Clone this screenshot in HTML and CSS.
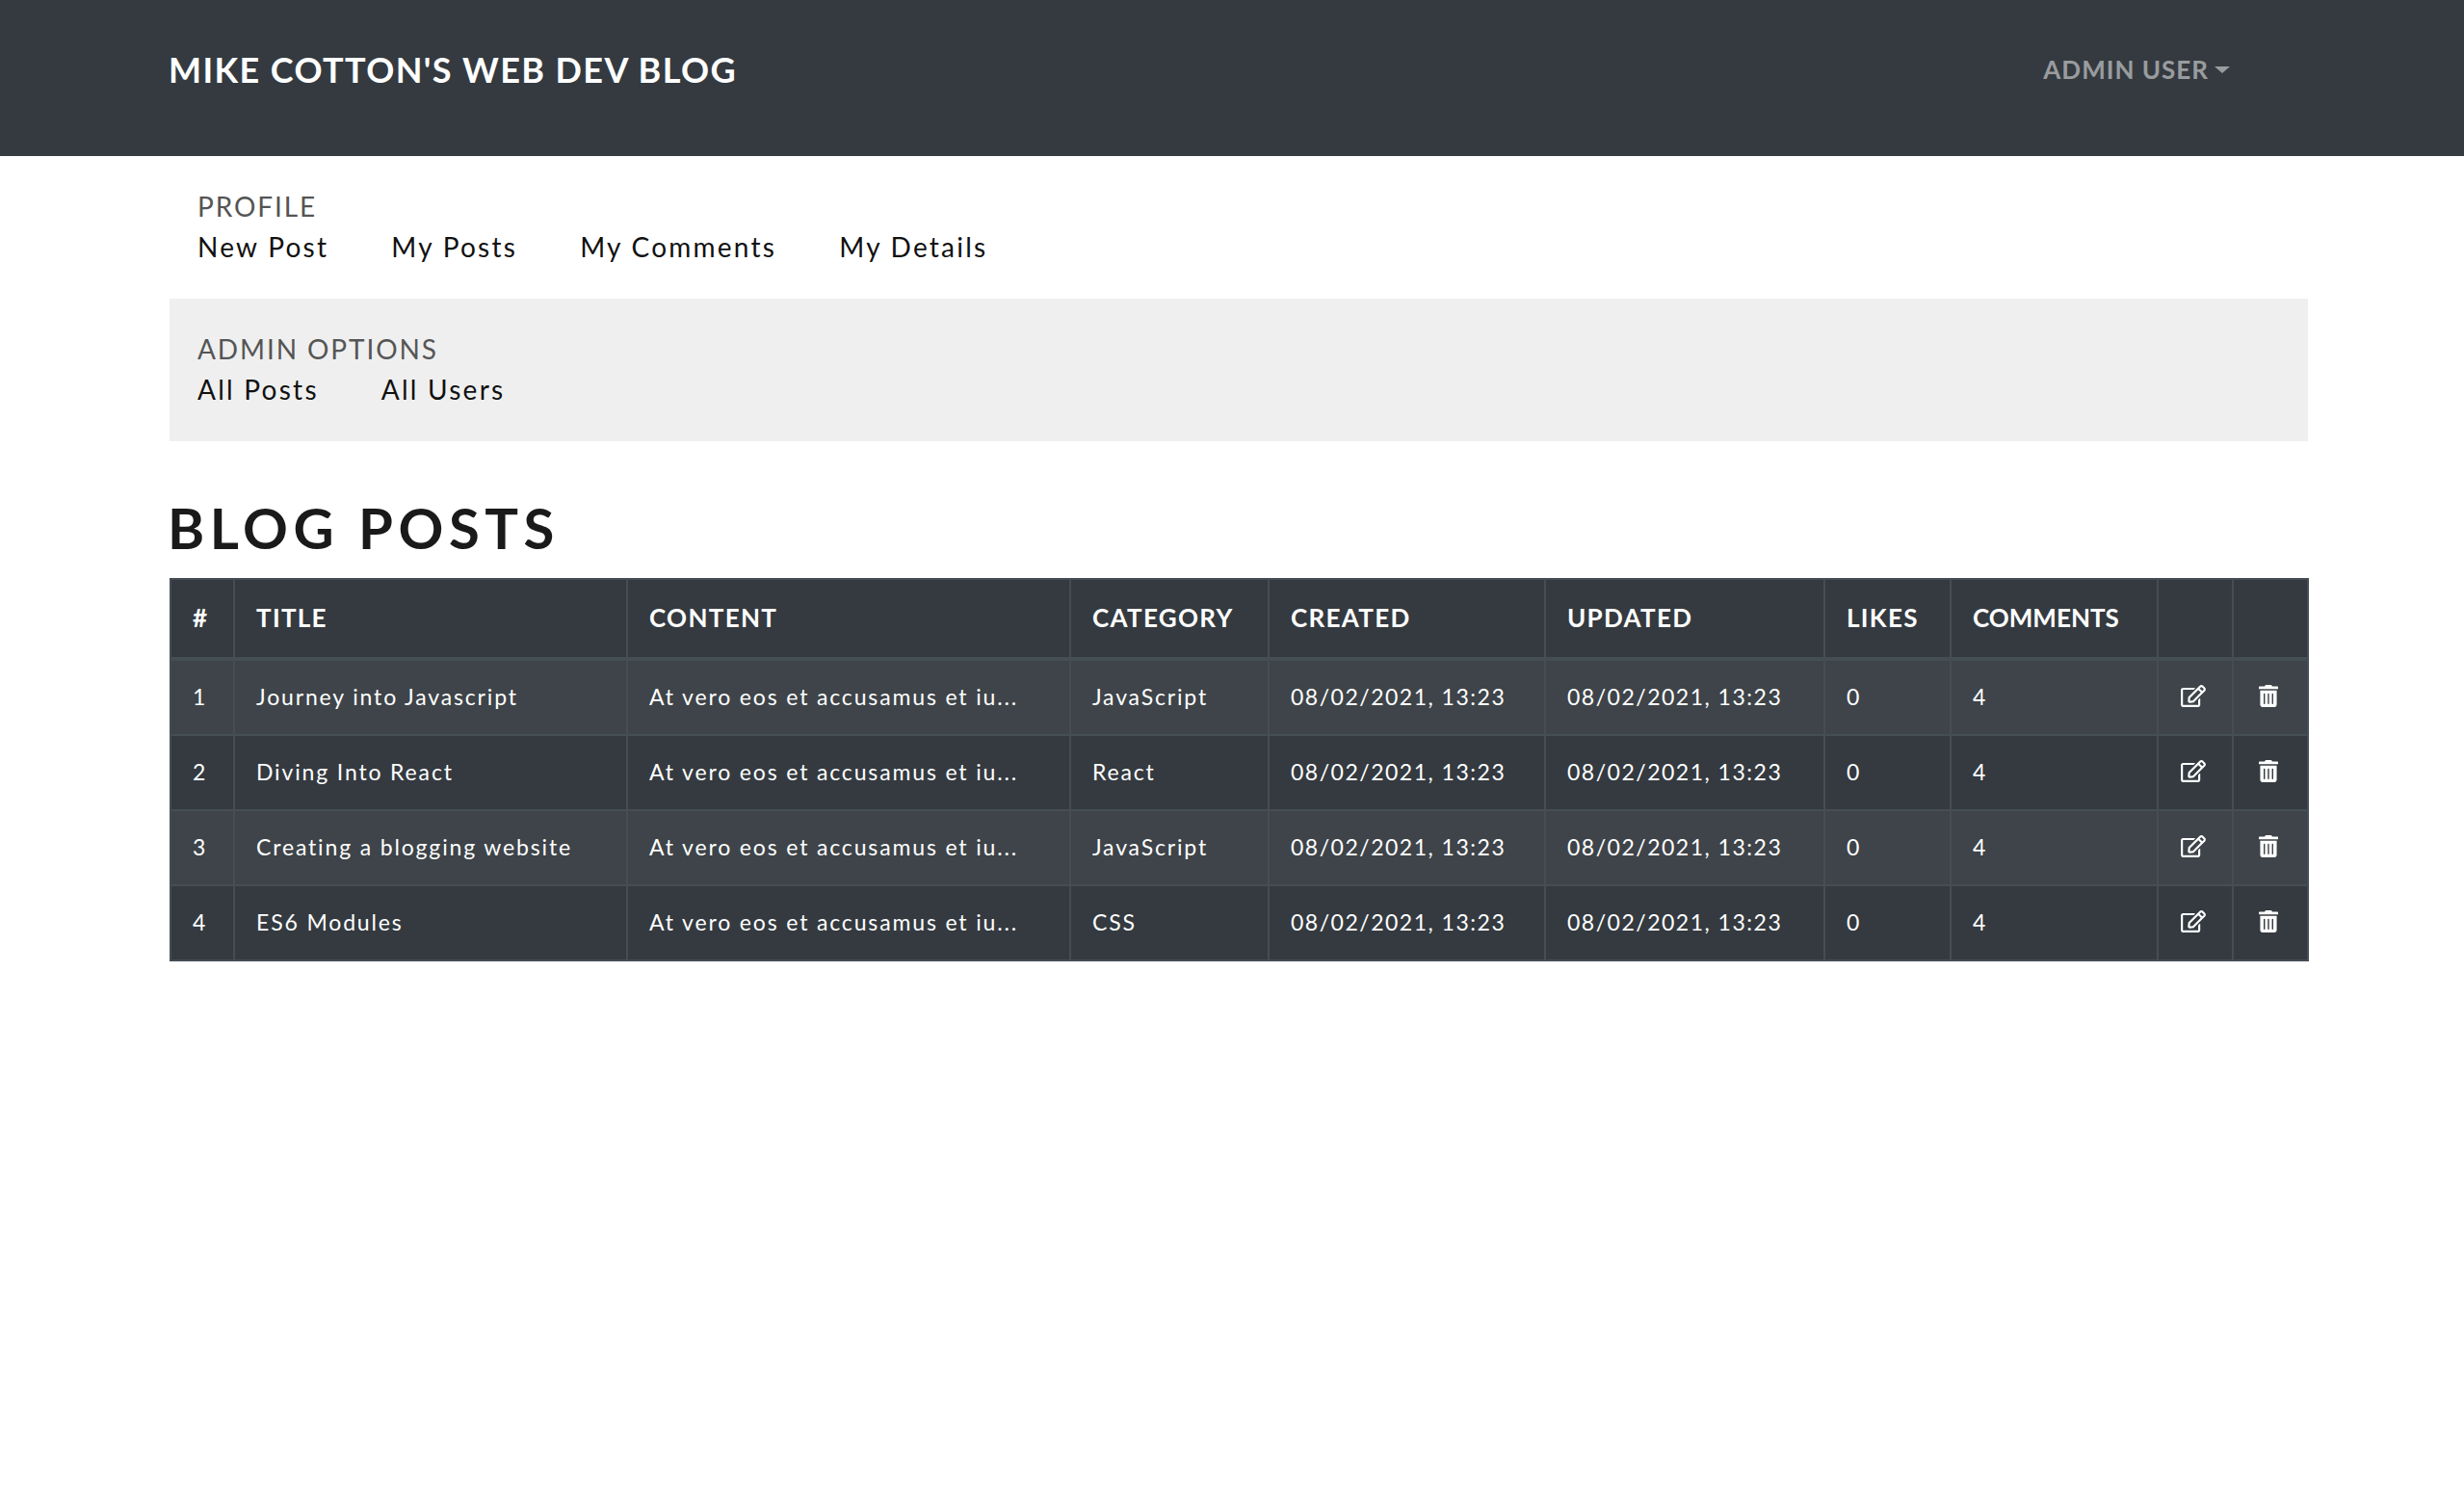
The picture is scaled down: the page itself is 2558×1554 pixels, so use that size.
FILE: index.html
```html
<!DOCTYPE html>
<html>
<head>
  <title>Mike Cotton's Web Dev Blog</title>
  <link rel="stylesheet" href="styles.css">
</head>
<body>
  <svg class="icon-defs" width="0" height="0">
    <symbol id="icon-edit" viewBox="0 0 576 512">
      <path d="M402.3 344.9l32-32c5-5 13.7-1.5 13.7 5.7V464c0 26.5-21.5 48-48 48H48c-26.5 0-48-21.5-48-48V112c0-26.5 21.5-48 48-48h273.5c7.1 0 10.7 8.6 5.7 13.7l-32 32c-1.5 1.5-3.5 2.3-5.7 2.3H48v352h352V350.5c0-2.1.8-4.1 2.3-5.6zm156.6-201.8L296.3 405.7l-90.4 10c-26.2 2.9-48.5-19.2-45.6-45.6l10-90.4L432.9 17.1c22.9-22.9 59.9-22.9 82.7 0l43.2 43.2c22.9 22.9 22.9 60 .1 82.8zM460.1 174L402 115.9 216.2 301.8l-7.3 65.3 65.3-7.3L460.1 174zm64.8-79.7l-43.2-43.2c-4.1-4.1-10.8-4.1-14.8 0L436 82l58.1 58.1 30.9-30.9c4-4.2 4-10.8-.1-14.9z"/>
    </symbol>
    <symbol id="icon-trash" viewBox="0 0 448 512">
      <path d="M32 464a48 48 0 0 0 48 48h288a48 48 0 0 0 48-48V128H32zm272-256a16 16 0 0 1 32 0v224a16 16 0 0 1-32 0zm-96 0a16 16 0 0 1 32 0v224a16 16 0 0 1-32 0zm-96 0a16 16 0 0 1 32 0v224a16 16 0 0 1-32 0zM432 32H312l-9.4-18.7A24 24 0 0 0 281.1 0H166.8a23.72 23.72 0 0 0-21.4 13.3L136 32H16A16 16 0 0 0 0 48v32a16 16 0 0 0 16 16h416a16 16 0 0 0 16-16V48a16 16 0 0 0-16-16z"/>
    </symbol>
  </svg>

  <nav class="navbar">
    <a class="brand" href="#">Mike Cotton's Web Dev Blog</a>
    <a class="user-menu" href="#">Admin User<span class="caret"></span></a>
  </nav>

  <div class="container">
    <div class="panel">
      <div class="panel-title">Profile</div>
      <div class="panel-links">
        <a href="#">New Post</a>
        <a href="#">My Posts</a>
        <a href="#">My Comments</a>
        <a href="#">My Details</a>
      </div>
    </div>
    <div class="panel panel-grey">
      <div class="panel-title">Admin Options</div>
      <div class="panel-links">
        <a href="#">All Posts</a>
        <a href="#">All Users</a>
      </div>
    </div>

    <h1>Blog Posts</h1>

    <table>
      <colgroup>
        <col class="col-id">
        <col class="col-title">
        <col class="col-content">
        <col class="col-category">
        <col class="col-date">
        <col class="col-updated">
        <col class="col-likes">
        <col class="col-comments">
        <col class="col-action">
        <col class="col-action">
      </colgroup>
      <thead>
        <tr>
          <th>#</th>
          <th>Title</th>
          <th>Content</th>
          <th>Category</th>
          <th>Created</th>
          <th>Updated</th>
          <th>Likes</th>
          <th class="th-tight">Comments</th>
          <th></th>
          <th></th>
        </tr>
      </thead>
      <tbody>
        <tr>
          <td>1</td>
          <td>Journey into Javascript</td>
          <td>At vero eos et accusamus et iu...</td>
          <td>JavaScript</td>
          <td class="date">08/02/2021, 13:23</td>
          <td class="date">08/02/2021, 13:23</td>
          <td>0</td>
          <td>4</td>
          <td class="action"><svg class="icon-edit"><use href="#icon-edit"/></svg></td>
          <td class="action"><svg class="icon-trash"><use href="#icon-trash"/></svg></td>
        </tr>
        <tr>
          <td>2</td>
          <td>Diving Into React</td>
          <td>At vero eos et accusamus et iu...</td>
          <td>React</td>
          <td class="date">08/02/2021, 13:23</td>
          <td class="date">08/02/2021, 13:23</td>
          <td>0</td>
          <td>4</td>
          <td class="action"><svg class="icon-edit"><use href="#icon-edit"/></svg></td>
          <td class="action"><svg class="icon-trash"><use href="#icon-trash"/></svg></td>
        </tr>
        <tr>
          <td>3</td>
          <td>Creating a blogging website</td>
          <td>At vero eos et accusamus et iu...</td>
          <td>JavaScript</td>
          <td class="date">08/02/2021, 13:23</td>
          <td class="date">08/02/2021, 13:23</td>
          <td>0</td>
          <td>4</td>
          <td class="action"><svg class="icon-edit"><use href="#icon-edit"/></svg></td>
          <td class="action"><svg class="icon-trash"><use href="#icon-trash"/></svg></td>
        </tr>
        <tr>
          <td>4</td>
          <td>ES6 Modules</td>
          <td>At vero eos et accusamus et iu...</td>
          <td>CSS</td>
          <td class="date">08/02/2021, 13:23</td>
          <td class="date">08/02/2021, 13:23</td>
          <td>0</td>
          <td>4</td>
          <td class="action"><svg class="icon-edit"><use href="#icon-edit"/></svg></td>
          <td class="action"><svg class="icon-trash"><use href="#icon-trash"/></svg></td>
        </tr>
      </tbody>
    </table>
  </div>
</body>
</html>
```

FILE: styles.css
```css
body {
  font-family: "Lato", "Open Sans", sans-serif;
  margin: 0;
  background-color: #fff;
  color: #111;
}
a {
  text-decoration: none;
  color: inherit;
}
.icon-defs {
  display: block;
  height: 0;
}
.navbar {
  height: 162px;
  box-sizing: border-box;
  padding: 50px 243px 0 175px;
  background-color: #343a40;
  display: flex;
  justify-content: space-between;
  align-items: flex-start;
  text-transform: uppercase;
}
.brand {
  font-size: 36px;
  line-height: 44px;
  font-weight: 700;
  letter-spacing: 1.4px;
  color: #fff;
}
.user-menu {
  font-size: 26px;
  line-height: 44px;
  font-weight: 700;
  letter-spacing: 1px;
  color: rgba(255, 255, 255, .5);
  display: flex;
  align-items: center;
}
.caret {
  width: 0;
  height: 0;
  margin-left: 6px;
  border-top: 7px solid rgba(255, 255, 255, .5);
  border-left: 8px solid transparent;
  border-right: 8px solid transparent;
}
.container {
  width: 2220px;
  margin-left: 176px;
}
.panel {
  height: 148px;
  box-sizing: border-box;
  padding: 34px 29px 0;
}
.panel-grey {
  padding-top: 34px;
  background-color: #efefef;
}
.panel-title {
  font-size: 28px;
  line-height: 36px;
  letter-spacing: 1.9px;
  text-transform: uppercase;
  color: #555;
}
.panel-links {
  display: flex;
  gap: 65px;
  margin-top: 6px;
  font-size: 28px;
  line-height: 36px;
  letter-spacing: 2.25px;
  color: #111;
}
h1 {
  margin: 57px 0 0 -2px;
  font-size: 58px;
  line-height: 66px;
  font-weight: 700;
  letter-spacing: 5.6px;
  text-transform: uppercase;
  color: #1a1a1a;
  height: 85px;
}
table {
  width: 2219px;
  table-layout: fixed;
  border-collapse: collapse;
  background-color: #343a40;
  color: #fff;
}
.col-id { width: 66px; }
.col-title { width: 408px; }
.col-content { width: 460px; }
.col-category { width: 206px; }
.col-date { width: 287px; }
.col-updated { width: 290px; }
.col-likes { width: 131px; }
.col-comments { width: 215px; }
.col-action { width: 78px; }
th, td {
  border: 2px solid #454d55;
  padding: 0 22px 3px;
  text-align: left;
  white-space: nowrap;
  overflow: hidden;
}
th {
  height: 77px;
  font-size: 26px;
  font-weight: 700;
  letter-spacing: 1.3px;
  text-transform: uppercase;
  border-bottom-width: 4px;
}
.th-tight {
  letter-spacing: 0;
}
td {
  height: 73px;
  font-size: 23px;
  letter-spacing: 1.85px;
}
td.date {
  letter-spacing: 1.5px;
}
tbody tr:nth-child(odd) {
  background-color: rgba(255, 255, 255, .05);
}
.action {
  padding: 0 4px 3px 0;
  text-align: center;
  line-height: 0;
}
.icon-edit {
  width: 26px;
  height: 23px;
  fill: #fff;
}
.icon-trash {
  width: 20px;
  height: 23px;
  fill: #fff;
}
```
